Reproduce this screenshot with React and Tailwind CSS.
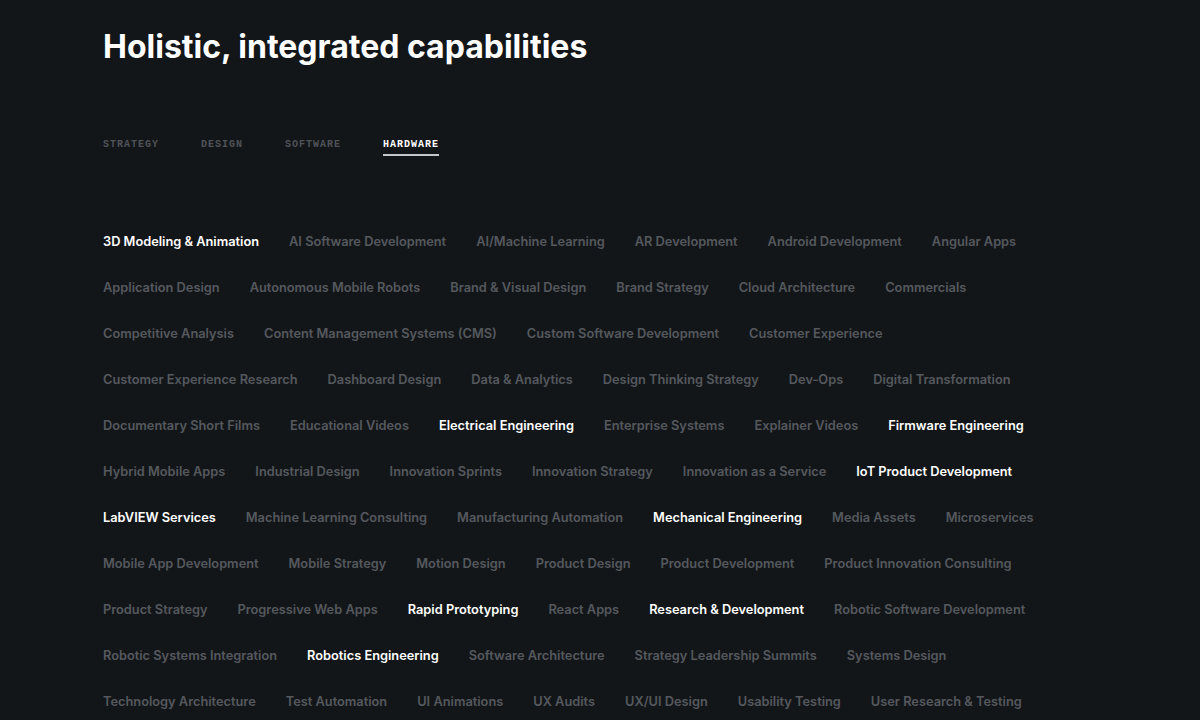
const rows = [
  [["3D Modeling & Animation", 1], ["AI Software Development"], ["AI/Machine Learning"], ["AR Development"], ["Android Development"], ["Angular Apps"]],
  [["Application Design"], ["Autonomous Mobile Robots"], ["Brand & Visual Design"], ["Brand Strategy"], ["Cloud Architecture"], ["Commercials"]],
  [["Competitive Analysis"], ["Content Management Systems (CMS)"], ["Custom Software Development"], ["Customer Experience"]],
  [["Customer Experience Research"], ["Dashboard Design"], ["Data & Analytics"], ["Design Thinking Strategy"], ["Dev-Ops"], ["Digital Transformation"]],
  [["Documentary Short Films"], ["Educational Videos"], ["Electrical Engineering", 1], ["Enterprise Systems"], ["Explainer Videos"], ["Firmware Engineering", 1]],
  [["Hybrid Mobile Apps"], ["Industrial Design"], ["Innovation Sprints"], ["Innovation Strategy"], ["Innovation as a Service"], ["IoT Product Development", 1]],
  [["LabVIEW Services", 1], ["Machine Learning Consulting"], ["Manufacturing Automation"], ["Mechanical Engineering", 1], ["Media Assets"], ["Microservices"]],
  [["Mobile App Development"], ["Mobile Strategy"], ["Motion Design"], ["Product Design"], ["Product Development"], ["Product Innovation Consulting"]],
  [["Product Strategy"], ["Progressive Web Apps"], ["Rapid Prototyping", 1], ["React Apps"], ["Research & Development", 1], ["Robotic Software Development"]],
  [["Robotic Systems Integration"], ["Robotics Engineering", 1], ["Software Architecture"], ["Strategy Leadership Summits"], ["Systems Design"]],
  [["Technology Architecture"], ["Test Automation"], ["UI Animations"], ["UX Audits"], ["UX/UI Design"], ["Usability Testing"], ["User Research & Testing"]],
];

const tabs = ["STRATEGY", "DESIGN", "SOFTWARE", "HARDWARE"];

export default function App() {
  return (
    <div className="min-h-screen w-full bg-[#131619] overflow-hidden" style={{ fontFamily: "Inter, 'Noto Sans', sans-serif" }}>
      <div className="pl-[103px] pt-[28px]">
        <h1 className="text-[32px] leading-[38px] font-bold text-white">Holistic, integrated capabilities</h1>
        <div className="mt-[72px] flex gap-[42px]" style={{ fontFamily: "'Liberation Mono', 'DejaVu Sans Mono', monospace" }}>
          {tabs.map((t) => (
            <div key={t} className={`text-[10px] leading-[14px] font-bold tracking-[1px] pb-[2px] border-b-2 ${t === "HARDWARE" ? "text-white border-[#c4c6c8]" : "text-[#4f5358] border-transparent"}`}>
              {t}
            </div>
          ))}
        </div>
        <div className="mt-[77px] flex flex-col">
          {rows.map((r, i) => (
            <div key={i} className="flex gap-[30px] h-[46px] items-start">
              {r.map(([label, on]) => (
                <span key={label} className={`text-[12.8px] leading-[18px] font-semibold whitespace-nowrap ${on ? "text-white" : "text-[#55595e]"}`}>
                  {label}
                </span>
              ))}
            </div>
          ))}
        </div>
      </div>
    </div>
  );
}
